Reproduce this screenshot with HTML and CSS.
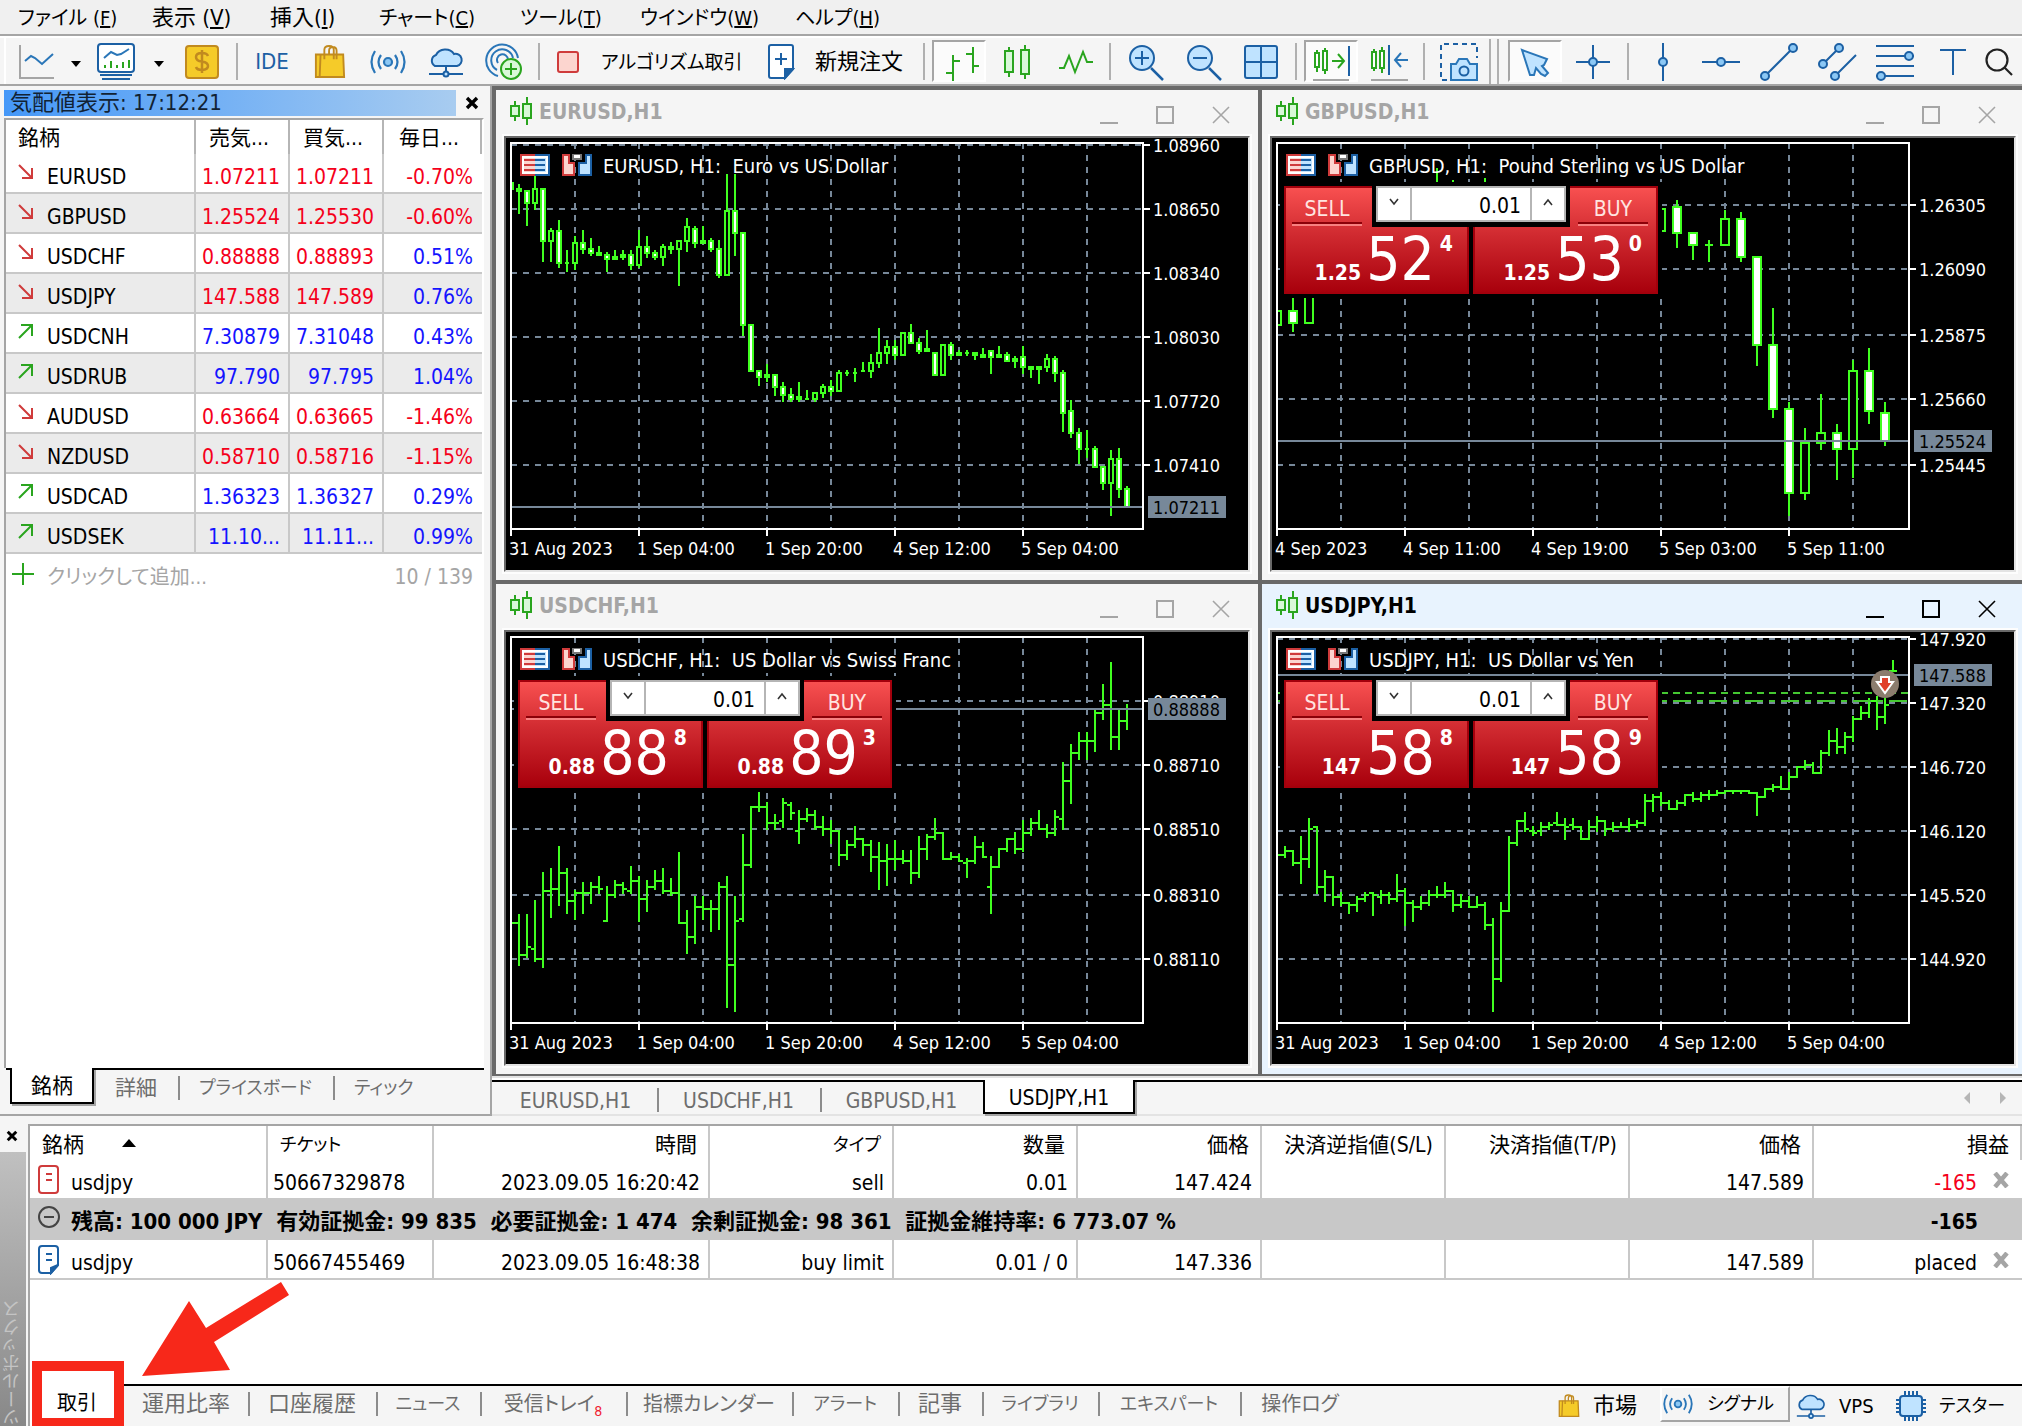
FILE: index.html
```html
<!DOCTYPE html>
<html lang="ja">
<head>
<meta charset="utf-8">
<title>USDJPY,H1</title>
<link rel="stylesheet" href="styles.css">
<script src="charts.js" defer></script>
</head>
<body>
<svg class="defs" aria-hidden="true">
  <defs>
    <clipPath id="plot"><path d="M5 5h632v386H5z"/></clipPath>
    <symbol id="i-candles" viewBox="0 0 24 28"><path d="M5 4v4M5 20v4M17 0v6M17 22v6" stroke="#2aa51f" stroke-width="2"/><path d="M1 9h8v10H1zM13 7h8v14h-8z" fill="#d9f8d9" stroke="#2aa51f" stroke-width="2"/></symbol>
    <symbol id="i-min" viewBox="0 0 18 18"><path d="M0 17h18" stroke="currentColor" stroke-width="2"/></symbol>
    <symbol id="i-max" viewBox="0 0 18 18"><path d="M1 1h16v16H1z" fill="none" stroke="currentColor" stroke-width="2"/></symbol>
    <symbol id="i-close" viewBox="0 0 18 18"><path d="M1 1l16 16M17 1L1 17" stroke="currentColor" stroke-width="1.6"/></symbol>
    <symbol id="i-x" viewBox="0 0 14 14"><path d="M2 2l10 10M12 2L2 12" stroke="currentColor" stroke-width="3.4"/></symbol>
    <symbol id="i-down" viewBox="0 0 16 16"><path d="M1 1l12 12M14 4v10H4" fill="none" stroke="#cf3b3b" stroke-width="2"/></symbol>
    <symbol id="i-up" viewBox="0 0 16 16"><path d="M1 14L13 2M3 1h11v11" fill="none" stroke="#2aa51f" stroke-width="2"/></symbol>
    <symbol id="i-bag" viewBox="0 0 34 36"><path d="M2 10h29l1 24H2z" fill="#f5cb29" stroke="#c18a1f" stroke-width="2"/><path d="M7 10L6 34M11 15V5q0-4 5-4t5 4v10M16 10V6q0-4 4-4t4 4v9" fill="none" stroke="#c18a1f" stroke-width="2"/></symbol>
    <symbol id="i-signal" viewBox="0 0 36 24"><g fill="none" stroke="#2a76b8" stroke-width="2.2"><circle cx="18" cy="12" r="4" fill="#8cc8f5"/><path d="M11 5q-5 7 0 14M5 1q-7 11 0 22M25 5q5 7 0 14M31 1q7 11 0 22"/></g></symbol>
    <symbol id="i-cloud" viewBox="0 0 36 32"><path d="M7 20a6 6 0 0 1 1-11 10 9 0 0 1 18-1 6 6 0 0 1 3 12z" fill="#bfe3ff" stroke="#1c60a4" stroke-width="2"/><path d="M18 20v6M1 28h34" stroke="#1c60a4" stroke-width="2"/><circle cx="18" cy="28" r="2.5" fill="#bfe3ff" stroke="#1c60a4" stroke-width="2"/></symbol>
    <symbol id="i-book" viewBox="0 0 30 22"><path d="M0 0h15v22H0z" fill="#cf3b3b"/><path d="M15 0h15v22H15z" fill="#1c60a4"/><path d="M2 2h26v18H2z" fill="#fff"/><path d="M4 4h11v14H4z" fill="#fcd5cf"/><path d="M15 4h11v14H15z" fill="#bfe3ff"/><path d="M4 6h11M4 11h11M4 16h11" stroke="#cf3b3b" stroke-width="2"/><path d="M15 6h10M15 11h10M15 16h10" stroke="#1c60a4" stroke-width="2"/></symbol>
    <symbol id="i-trade" viewBox="0 0 30 22"><path d="M1 1h6v8h5v12H1z" fill="#fcd5cf" stroke="#cf3b3b" stroke-width="2"/><path d="M29 1h-5v8h-7v12h12z" fill="#bfe3ff" stroke="#1c60a4" stroke-width="2"/><path d="M11 0h8v5h-8z" fill="#fff" stroke="#777" stroke-width="2"/></symbol>
    <symbol id="i-chev-d" viewBox="0 0 10 8"><path d="M1 1l4 5 4-5" fill="none" stroke="#333" stroke-width="1.6"/></symbol>
    <symbol id="i-chev-u" viewBox="0 0 10 8"><path d="M1 7l4-5 4 5" fill="none" stroke="#333" stroke-width="1.6"/></symbol>
  </defs>
</svg>

<nav class="menu">
  <button>ファイル (<u>F</u>)</button><button class="kanji">表示 (<u>V</u>)</button><button class="kanji">挿入(<u>I</u>)</button><button>チャート(<u>C</u>)</button><button>ツール(<u>T</u>)</button><button>ウインドウ(<u>W</u>)</button><button>ヘルプ(<u>H</u>)</button>
</nav>

<div class="toolbar">
  <button aria-label="Chart type"><svg width="40" height="40"><path d="M4 3v33h34" fill="none" stroke="#a5a5a5" stroke-width="2"/><path d="M9 19l6-5 4 2 7 6L37 12" fill="none" stroke="#2a76b8" stroke-width="2"/></svg></button>
  <button class="drop" aria-label="More"><svg width="10" height="6"><path d="M0 0h10L5 6z"/></svg></button>
  <button aria-label="Indicators"><svg width="40" height="40"><rect x="2" y="2" width="36" height="28" rx="3" fill="#fff" stroke="#1c60a4" stroke-width="2"/><path d="M4 33h32M6 37h28" stroke="#1c60a4" stroke-width="2"/><path d="M8 16l7-6 6 3 4-1 8-5" fill="none" stroke="#2a76b8" stroke-width="2"/><path d="M9 26v-3M15 26v-7M21 26v-3M27 26v-6M33 26v-8" stroke="#2aa51f" stroke-width="2"/></svg></button>
  <button class="drop wide" aria-label="More"><svg width="10" height="6"><path d="M0 0h10L5 6z"/></svg></button>
  <button aria-label="Quotes"><svg width="40" height="40"><rect x="4" y="4" width="32" height="32" rx="3" fill="#f5cb29" stroke="#c18a1f" stroke-width="2"/><path d="M26 14q-1-3-6-3-6 0-6 4t6 4.500q6 1 6 4.500t-6 4q-5 0-6-3M20 8v23" fill="none" stroke="#c18a1f" stroke-width="2.500"/></svg></button>
  <i class="sep"></i>
  <button class="ide">IDE</button>
  <button aria-label="Market"><svg width="32" height="36"><use href="#i-bag"/></svg></button>
  <button aria-label="Signals"><svg width="36" height="24"><use href="#i-signal"/></svg></button>
  <button aria-label="VPS"><svg width="36" height="32"><use href="#i-cloud"/></svg></button>
  <button aria-label="Community"><svg width="40" height="40"><g fill="none" stroke="#2a76b8" stroke-width="2"><path d="M14 34A16 16 0 1 1 34 16M13 28A11 11 0 1 1 29 16M14 21A5.500 5.500 0 1 1 24 18"/></g><circle cx="27" cy="27" r="10" fill="#d9f8d9" stroke="#2aa51f" stroke-width="2"/><path d="M27 21v12M21 27h12" stroke="#2aa51f" stroke-width="2"/></svg></button>
  <i class="sep"></i>
  <button class="algo"><svg width="22" height="22"><rect x="1" y="1" width="20" height="20" rx="2" fill="#fcd5cf" stroke="#cf3b3b" stroke-width="2"/></svg>アルゴリズム取引</button>
  <button class="order"><svg width="28" height="36"><path d="M4 1h20q2 0 2 2v22l-8 9H4q-2 0-2-2V3q0-2 2-2z" fill="#fff" stroke="#1c60a4" stroke-width="2"/><path d="M26 25l-8 9v-9zM14 9v12M8 15h12" fill="#1c60a4" stroke="#1c60a4" stroke-width="2"/></svg>新規注文</button>
  <i class="sep"></i>
  <button class="on" aria-label="Bars"><svg width="40" height="40"><path d="M14 14v26M14 20h7M7 32h7M34 6v26M27 13h7M34 25h7" stroke="#2aa51f" stroke-width="2"/></svg></button>
  <button aria-label="Candles"><svg width="40" height="40"><path d="M12 5v4M12 31v4M28 3v4M28 33v4" stroke="#2aa51f" stroke-width="2"/><path d="M8 9h8v21H8zM24 8h8v24h-8z" fill="#d9f8d9" stroke="#2aa51f" stroke-width="2"/></svg></button>
  <button aria-label="Line"><svg width="40" height="40"><path d="M4 26h5l5-12 6 16 8-20 4 10h6" fill="none" stroke="#2aa51f" stroke-width="2"/></svg></button>
  <i class="sep"></i>
  <button aria-label="Zoom in"><svg width="40" height="40"><path d="M26 26l12 12" stroke="#1c60a4" stroke-width="2.500"/><circle cx="17" cy="16" r="12" fill="#bfe3ff" stroke="#1c60a4" stroke-width="2"/><path d="M10 16h14M17 9v14" stroke="#1c60a4" stroke-width="2"/></svg></button>
  <button aria-label="Zoom out"><svg width="40" height="40"><path d="M26 26l12 12" stroke="#1c60a4" stroke-width="2.500"/><circle cx="17" cy="16" r="12" fill="#bfe3ff" stroke="#1c60a4" stroke-width="2"/><path d="M10 16h14" stroke="#1c60a4" stroke-width="2"/></svg></button>
  <button aria-label="Tile"><svg width="40" height="40"><rect x="4" y="4" width="32" height="32" rx="2" fill="#bfe3ff" stroke="#1c60a4" stroke-width="2"/><path d="M20 4v32M4 20h32" stroke="#1c60a4" stroke-width="2"/></svg></button>
  <i class="sep"></i>
  <button class="on" aria-label="Auto scroll"><svg width="40" height="40"><path d="M6 9v22M14 7v26" stroke="#2aa51f" stroke-width="2"/><path d="M4 12h4v14H4zM12 10h4v19h-4z" fill="#fff" stroke="#2aa51f" stroke-width="2"/><path d="M21 20h12M27 13l6 7-6 7" fill="none" stroke="#2aa51f" stroke-width="2"/><path d="M38 5v30" stroke="#1c60a4" stroke-width="2"/><path d="M2 39h36" stroke="#a5a5a5" stroke-width="2"/></svg></button>
  <button aria-label="Chart shift"><svg width="40" height="40"><path d="M5 7v22M13 5v26" stroke="#2aa51f" stroke-width="2"/><path d="M3 10h4v16H3zM11 9h4v17h-4z" fill="#fff" stroke="#2aa51f" stroke-width="2"/><path d="M20 3v30" stroke="#1c60a4" stroke-width="2"/><path d="M39 18H26M32 11l-6 7 6 7" fill="none" stroke="#2a76b8" stroke-width="2"/><path d="M2 38h37" stroke="#a5a5a5" stroke-width="2"/></svg></button>
  <i class="sep"></i>
  <button aria-label="Screenshot"><svg width="40" height="40"><path d="M8 38H2V2h36v14" fill="none" stroke="#1c60a4" stroke-width="2" stroke-dasharray="5 4"/><path d="M12 22h5l3-5h8l3 5h7v16H12z" fill="#bfe3ff" stroke="#2a76b8" stroke-width="2"/><circle cx="25" cy="29" r="4.500" fill="#bfe3ff" stroke="#1c60a4" stroke-width="2"/></svg></button>
  <i class="sep double"></i>
  <button class="on" aria-label="Cursor"><svg width="40" height="40"><path d="M7 9l25 9-3 6-2 1 6 7-3 3-4-2-5-6-2 7h-4z" fill="#bfe3ff" stroke="#2a76b8" stroke-width="2"/></svg></button>
  <button aria-label="Crosshair"><svg width="40" height="40"><path d="M3 20h34M20 3v34" stroke="#1c60a4" stroke-width="2"/><circle cx="20" cy="20" r="4" fill="#8cc8f5" stroke="#1c60a4" stroke-width="2"/></svg></button>
  <i class="sep"></i>
  <button aria-label="Vertical line"><svg width="40" height="40"><path d="M20 1v38" stroke="#1c60a4" stroke-width="2"/><circle cx="20" cy="20" r="4" fill="#8cc8f5" stroke="#1c60a4" stroke-width="2"/></svg></button>
  <button aria-label="Horizontal line"><svg width="40" height="40"><path d="M1 20h38" stroke="#1c60a4" stroke-width="2"/><circle cx="20" cy="20" r="4" fill="#8cc8f5" stroke="#1c60a4" stroke-width="2"/></svg></button>
  <button aria-label="Trend line"><svg width="40" height="40"><path d="M6 34L34 6" stroke="#1c60a4" stroke-width="2"/><g fill="#8cc8f5" stroke="#1c60a4" stroke-width="2"><circle cx="6" cy="34" r="4"/><circle cx="34" cy="6" r="4"/></g></svg></button>
  <button aria-label="Channel"><svg width="40" height="40"><path d="M6 22L22 6M18 34l21-21" stroke="#1c60a4" stroke-width="2"/><g fill="#8cc8f5" stroke="#1c60a4" stroke-width="2"><circle cx="6" cy="22" r="4"/><circle cx="22" cy="6" r="4"/><circle cx="18" cy="34" r="4"/></g></svg></button>
  <button aria-label="Fibonacci"><svg width="40" height="40"><path d="M1 4h38M1 14h38M1 24h38M1 34h38" stroke="#1c60a4" stroke-width="2"/><g fill="#8cc8f5" stroke="#1c60a4" stroke-width="2"><circle cx="34" cy="14" r="4"/><circle cx="6" cy="34" r="4"/></g></svg></button>
  <button aria-label="Text"><svg width="40" height="40"><path d="M7 8h26M20 8v25" stroke="#1c60a4" stroke-width="2"/></svg></button>
  <button class="search" aria-label="Search"><svg width="34" height="40"><circle cx="15" cy="18" r="10.500" fill="none" stroke="#222" stroke-width="2.200"/><path d="M22 25l8 8" stroke="#222" stroke-width="2.200"/></svg></button>
</div>

<main class="main">
  <section class="watch">
    <header><h2>気配値表示: 17:12:21</h2><button aria-label="Close"><svg width="14" height="14"><use href="#i-x"/></svg></button></header>
    <div class="watch-body">
      <table class="quotes">
        <thead><tr><th>銘柄</th><th>売気...</th><th>買気...</th><th>毎日...</th></tr></thead>
        <tbody>
          <tr><td><svg><use href="#i-down"/></svg>EURUSD</td><td class="neg">1.07211</td><td class="neg">1.07211</td><td class="neg">-0.70%</td></tr>
          <tr><td><svg><use href="#i-down"/></svg>GBPUSD</td><td class="neg">1.25524</td><td class="neg">1.25530</td><td class="neg">-0.60%</td></tr>
          <tr><td><svg><use href="#i-down"/></svg>USDCHF</td><td class="neg">0.88888</td><td class="neg">0.88893</td><td class="pos">0.51%</td></tr>
          <tr><td><svg><use href="#i-down"/></svg>USDJPY</td><td class="neg">147.588</td><td class="neg">147.589</td><td class="pos">0.76%</td></tr>
          <tr><td><svg><use href="#i-up"/></svg>USDCNH</td><td class="pos">7.30879</td><td class="pos">7.31048</td><td class="pos">0.43%</td></tr>
          <tr><td><svg><use href="#i-up"/></svg>USDRUB</td><td class="pos">97.790</td><td class="pos">97.795</td><td class="pos">1.04%</td></tr>
          <tr><td><svg><use href="#i-down"/></svg>AUDUSD</td><td class="neg">0.63664</td><td class="neg">0.63665</td><td class="neg">-1.46%</td></tr>
          <tr><td><svg><use href="#i-down"/></svg>NZDUSD</td><td class="neg">0.58710</td><td class="neg">0.58716</td><td class="neg">-1.15%</td></tr>
          <tr><td><svg><use href="#i-up"/></svg>USDCAD</td><td class="pos">1.36323</td><td class="pos">1.36327</td><td class="pos">0.29%</td></tr>
          <tr><td><svg><use href="#i-up"/></svg>USDSEK</td><td class="pos">11.10...</td><td class="pos">11.11...</td><td class="pos">0.99%</td></tr>
        </tbody>
      </table>
      <div class="add"><svg width="22" height="22"><path d="M11 0v22M0 11h22" stroke="#2aa51f" stroke-width="2"/></svg><span>クリックして追加...</span><span class="count">10 / 139</span></div>
    </div>
    <nav class="watch-tabs"><button class="active">銘柄</button><button class="kanji">詳細</button><button class="kana">プライスボード</button><button class="kana">ティック</button></nav>
  </section>

  <section class="mdi">
    <div class="windows">
      <article class="win">
        <header><svg class="w-icon"><use href="#i-candles"/></svg><h3>EURUSD,H1</h3><button aria-label="Minimize"><svg><use href="#i-min"/></svg></button><button aria-label="Maximize"><svg><use href="#i-max"/></svg></button><button aria-label="Close"><svg><use href="#i-close"/></svg></button></header>
        <div class="frame"><svg class="chart" data-chart="eurusd" width="742" height="432"></svg></div>
      </article>
      <article class="win">
        <header><svg class="w-icon"><use href="#i-candles"/></svg><h3>GBPUSD,H1</h3><button aria-label="Minimize"><svg><use href="#i-min"/></svg></button><button aria-label="Maximize"><svg><use href="#i-max"/></svg></button><button aria-label="Close"><svg><use href="#i-close"/></svg></button></header>
        <div class="frame"><svg class="chart" data-chart="gbpusd" width="742" height="432"></svg>
          <div class="deal">
            <button class="side"><span class="name">SELL</span><span class="price"><b>1.25</b><span class="big">52</span><span class="pip">4</span></span></button>
            <button class="side"><span class="name">BUY</span><span class="price"><b>1.25</b><span class="big">53</span><span class="pip">0</span></span></button>
            <div class="lot"><button aria-label="Less"><svg><use href="#i-chev-d"/></svg></button><input value="0.01" aria-label="Volume"><button aria-label="More"><svg><use href="#i-chev-u"/></svg></button></div>
          </div>
        </div>
      </article>
      <article class="win">
        <header><svg class="w-icon"><use href="#i-candles"/></svg><h3>USDCHF,H1</h3><button aria-label="Minimize"><svg><use href="#i-min"/></svg></button><button aria-label="Maximize"><svg><use href="#i-max"/></svg></button><button aria-label="Close"><svg><use href="#i-close"/></svg></button></header>
        <div class="frame"><svg class="chart" data-chart="usdchf" width="742" height="432"></svg>
          <div class="deal">
            <button class="side"><span class="name">SELL</span><span class="price"><b>0.88</b><span class="big">88</span><span class="pip">8</span></span></button>
            <button class="side"><span class="name">BUY</span><span class="price"><b>0.88</b><span class="big">89</span><span class="pip">3</span></span></button>
            <div class="lot"><button aria-label="Less"><svg><use href="#i-chev-d"/></svg></button><input value="0.01" aria-label="Volume"><button aria-label="More"><svg><use href="#i-chev-u"/></svg></button></div>
          </div>
        </div>
      </article>
      <article class="win current">
        <header><svg class="w-icon"><use href="#i-candles"/></svg><h3>USDJPY,H1</h3><button aria-label="Minimize"><svg><use href="#i-min"/></svg></button><button aria-label="Maximize"><svg><use href="#i-max"/></svg></button><button aria-label="Close"><svg><use href="#i-close"/></svg></button></header>
        <div class="frame"><svg class="chart" data-chart="usdjpy" width="742" height="432"></svg>
          <div class="deal">
            <button class="side"><span class="name">SELL</span><span class="price"><b>147</b><span class="big">58</span><span class="pip">8</span></span></button>
            <button class="side"><span class="name">BUY</span><span class="price"><b>147</b><span class="big">58</span><span class="pip">9</span></span></button>
            <div class="lot"><button aria-label="Less"><svg><use href="#i-chev-d"/></svg></button><input value="0.01" aria-label="Volume"><button aria-label="More"><svg><use href="#i-chev-u"/></svg></button></div>
          </div>
        </div>
      </article>
    </div>
    <nav class="mdi-tabs">
      <button>EURUSD,H1</button><button>USDCHF,H1</button><button>GBPUSD,H1</button><button class="active">USDJPY,H1</button>
      <span class="scroll"><button aria-label="Previous"><svg width="6" height="12"><path d="M6 0v12L0 6z"/></svg></button><button aria-label="Next"><svg width="6" height="12"><path d="M0 0v12l6-6z"/></svg></button></span>
    </nav>
  </section>
</main>

<section class="toolbox">
  <aside><button aria-label="Close"><svg width="12" height="12"><use href="#i-x"/></svg></button><span>ツールボックス</span></aside>
  <div class="toolbox-body">
    <table class="trades">
      <colgroup><col class="c-sym"><col class="c-ticket"><col class="c-time"><col><col><col><col><col><col><col class="c-profit"></colgroup>
      <thead><tr><th>銘柄<svg width="14" height="8"><path d="M7 0l7 8H0z"/></svg></th><th class="kana">チケット</th><th>時間</th><th class="kana">タイプ</th><th>数量</th><th>価格</th><th>決済逆指値(S/L)</th><th>決済指値(T/P)</th><th>価格</th><th>損益</th></tr></thead>
      <tbody>
        <tr><td><svg width="22" height="30"><rect x="1" y="1" width="19" height="27" rx="3" fill="#fff" stroke="#cf3b3b" stroke-width="2"/><path d="M8 9h6M8 15h6" stroke="#cf3b3b" stroke-width="2"/></svg>usdjpy</td><td>50667329878</td><td>2023.09.05 16:20:42</td><td>sell</td><td>0.01</td><td>147.424</td><td></td><td></td><td>147.589</td><td><span class="neg">-165</span><button aria-label="Close position"><svg width="18" height="16"><path d="M3 1l12 14M15 1L3 15" stroke="#a5a5a5" stroke-width="4.500"/></svg></button></td></tr>
        <tr class="sum"><td colspan="9"><svg width="22" height="22"><circle cx="11" cy="11" r="10" fill="none" stroke="#444" stroke-width="2"/><path d="M6 11h10" stroke="#444" stroke-width="2"/></svg>残高: 100 000 JPY&nbsp; 有効証拠金: 99 835&nbsp; 必要証拠金: 1 474&nbsp; 余剰証拠金: 98 361&nbsp; 証拠金維持率: 6 773.07 %</td><td>-165</td></tr>
        <tr><td><svg width="22" height="30"><path d="M4 1h13q3 0 3 3v16l-7 8H4q-3 0-3-3V4q0-3 3-3z" fill="#fff" stroke="#1c60a4" stroke-width="2"/><path d="M20 20l-7 8v-5zM8 9h6M8 15h6" fill="#1c60a4" stroke="#1c60a4" stroke-width="2"/></svg>usdjpy</td><td>50667455469</td><td>2023.09.05 16:48:38</td><td>buy limit</td><td>0.01 / 0</td><td>147.336</td><td></td><td></td><td>147.589</td><td>placed<button aria-label="Cancel order"><svg width="18" height="16"><path d="M3 1l12 14M15 1L3 15" stroke="#a5a5a5" stroke-width="4.500"/></svg></button></td></tr>
      </tbody>
    </table>
    <footer>
      <nav class="box-tabs"><button class="active">取引</button><button class="kanji">運用比率</button><button class="kanji">口座履歴</button><button class="kana">ニュース</button><button>受信トレイ<sub>8</sub></button><button>指標カレンダー</button><button class="kana">アラート</button><button class="kanji">記事</button><button class="kana">ライブラリ</button><button class="kana">エキスパート</button><button>操作ログ</button></nav>
      <nav class="services"><button class="kanji"><svg width="22" height="26"><use href="#i-bag"/></svg>市場</button><button class="raised kana"><svg width="32" height="20"><use href="#i-signal"/></svg>シグナル</button><button><svg width="30" height="28"><use href="#i-cloud"/></svg>VPS</button><button class="kana"><svg width="30" height="30"><path d="M9 0v30M13 0v30M17 0v30M21 0v30M0 9h30M0 13h30M0 17h30M0 21h30" stroke="#1c60a4" stroke-width="2"/><rect x="4" y="5" width="22" height="20" rx="3" fill="#bfe3ff" stroke="#1c60a4" stroke-width="2"/></svg>テスター</button></nav>
    </footer>
    <div class="callout"></div>
    <svg class="arrow" width="150" height="96"><path d="M0 94L47 19l17 27L139 0l8 13L72 60l16 28z" fill="#f7281a"/></svg>
  </div>
</section>
</body>
</html>
```
FILE: styles.css
```css
* { box-sizing: border-box; }
body {
  margin: 0;
  min-height: 100vh;
  display: flex;
  flex-direction: column;
  background: #f5f5f5;
  color: #000;
  font: 21px/26px "DejaVu Sans Condensed", "Noto Sans CJK JP", sans-serif;
  font-feature-settings: "palt";
}
button {
  margin: 0;
  padding: 0;
  border: 0;
  background: none;
  color: inherit;
  font: inherit;
  font-feature-settings: inherit;
  white-space: nowrap;
}
h2, h3 { margin: 0; font-size: 21px; line-height: 26px; }
svg { display: block; flex: none; }
.defs { position: absolute; width: 0; height: 0; }
.neg { color: #f5001a; }
.pos { color: #1414ff; }

/* menu */
.menu {
  display: grid;
  grid-template-columns: 134px 118px 109px 141px 120px 155px 100px;
  height: 36px;
  padding: 2px 0 0 18px;
  background: #f0f0f0;
  border-bottom: 2px solid #a5a5a5;
  font-size: 20px;
}
.menu button { text-align: left; }

/* toolbar */
.toolbar {
  display: flex;
  height: 50px;
  padding: 1px 0 0 7px;
  border-top: 2px solid #fff;
  border-bottom: 2px solid #a5a5a5;
  box-shadow: inset 4px 0 #f5f5f5, inset 6px 0 #fff;
}
.toolbar button { display: flex; align-items: center; justify-content: center; flex: none; width: 58px; }
.toolbar .drop { width: 22px; padding-top: 4px; }
.toolbar .wide { width: 28px; }
.toolbar .ide { color: #1c60a4; font-size: 22px; }
.toolbar .algo, .toolbar .order { justify-content: flex-start; padding-left: 12px; gap: 22px; }
.toolbar .algo { width: 206px; font-size: 19px; }
.toolbar .order { width: 167px; padding-left: 16px; gap: 20px; font-size: 22px; }
.toolbar .search { width: 34px; }
.toolbar .on {
  width: 54px;
  margin: 1px 2px 2px;
  background: #fbfbfb;
  border: 2px solid #fff;
  border-top-color: #a5a5a5;
  border-left-color: #a5a5a5;
}
.sep { flex: none; width: 2px; margin: 4px 5px; background: #b0b0b0; }
.double { width: 10px; margin: 0 7px 0 1px; background: none; border: solid #b0b0b0; border-width: 0 2px; }

/* main area */
.main { display: grid; grid-template-columns: 490px minmax(0, 1fr); height: 1030px; }

.watch { display: flex; flex-direction: column; padding: 4px 6px 6px 4px; border-bottom: 2px solid #a5a5a5; }
.watch header { display: flex; align-items: center; height: 26px; margin-bottom: 2px; }
.watch h2 {
  width: 452px;
  padding-left: 6px;
  font-size: 22px;
  font-weight: normal;
  color: #123;
  background: linear-gradient(90deg, #4598f8, #a8ccf0);
}
.watch header button { padding-left: 9px; }
.watch-body { flex: 1; width: 480px; background: #fff; border: 2px solid #a5a5a5; border-width: 2px 0 0 2px; border-right: 2px solid #fff; }
.quotes { width: 476px; border-spacing: 0; table-layout: fixed; }
.quotes th { height: 34px; padding: 2px 6px 0 0; font-weight: normal; border-right: 2px solid #b5b5b5; }
.quotes th:first-child { width: 190px; padding-left: 12px; text-align: left; }
.quotes th:nth-child(2) { width: 94px; }
.quotes th:nth-child(3) { width: 94px; }
.quotes td { height: 40px; padding: 7px 8px 0 0; text-align: right; border: solid #c8c8c8; border-width: 0 2px 2px 0; }
.quotes td:last-child { border-right-width: 0; padding-right: 9px; }
.quotes td:first-child { padding: 7px 0 0 12px; text-align: left; }
.quotes td svg { float: left; width: 16px; height: 16px; margin: 0 13px 0 0; }
.quotes tr:nth-child(even) { background: #ebebeb; }
.add { display: flex; gap: 13px; height: 40px; padding: 9px 9px 0 6px; color: #a5a5a5; }
.add span { padding-top: 1px; font-size: 20px; }
.add .count { margin-left: auto; font-size: 21px; }

.watch-tabs { display: flex; width: 478px; height: 40px; margin-left: 2px; border-top: 2px solid #000; color: #6d6d6d; font-size: 21px; }
.watch-tabs button { position: relative; height: 34px; padding: 2px 21px 0; }
.watch-tabs button + button + button::before, .mdi-tabs > button + button:not(.active)::before,
.box-tabs button:nth-child(n+3)::before { content: ""; position: absolute; left: 0; top: 6px; width: 2px; height: 24px; background: #8c8c8c; }
.watch-tabs .active { margin: -2px 0 0 4px; height: 36px; width: 84px; padding: 2px 0 0; background: #fff; color: #000; border: 2px solid #000; border-top: 0; box-shadow: 2px 2px #a5a5a5; }

.mdi { display: flex; flex-direction: column; min-width: 0; border-left: 2px solid #a5a5a5; }
.windows {
  display: grid;
  grid-template-columns: minmax(0, 762fr) minmax(0, 760fr);
  gap: 4px;
  padding: 4px 0 2px 4px;
  background: #696969;
}
.win { padding: 0 6px 6px; background: #f5f5f5; color: #a5a5a5; }
.win header { display: flex; align-items: center; height: 44px; padding: 0 22px 0 8px; }
.win:nth-child(even) { padding-right: 4px; }
.w-icon { width: 24px; height: 28px; margin-top: -2px; }
.win h3 { flex: 1; padding-left: 5px; }
.win header button { padding-top: 6px; margin-left: 38px; }
.win header button svg { width: 18px; height: 18px; }
.current { background: #e8f3fe; color: #000; }
.frame {
  position: relative;
  margin: 2px;
  overflow: hidden;
  background: #000;
  border: 2px solid;
  border-color: #696969 #e3e3e3 #e3e3e3 #696969;
  outline: 2px solid #fdfdfd;
  box-shadow: -2px -2px 0 0 #a5a5a5;
}
.chart { font-size: 18px; fill: #fff; }
.chart .title { font-size: 20px; }

/* one click trading */
.deal { position: absolute; left: 12px; top: 48px; display: flex; gap: 4px; background: #000; box-shadow: 0 0 0 4px #000; }
.side {
  display: flex;
  flex-direction: column;
  width: 185px;
  height: 108px;
  border: 2px solid #a3000c;
  color: #fff;
  background: linear-gradient(#f85050, #d02a30 45%, #a8000c);
}
.side .name { width: 70px; height: 40px; margin: 0 6px; padding-top: 8px; border-bottom: 2px solid #f88080; color: #ffe4e0; box-shadow: inset 0 -2px #8c0008; }
.side:nth-child(2) .name { align-self: flex-end; margin-right: 8px; }
.price { display: flex; align-items: baseline; align-self: flex-end; gap: 5px; padding-right: 14px; }
.big { font-size: 60px; line-height: 66px; }
.pip { align-self: flex-start; font-weight: bold; line-height: 36px; }
.lot { position: absolute; left: 88px; top: 0; display: flex; width: 198px; height: 41px; padding: 0 4px 5px; background: #000; }
.lot button { display: flex; align-items: center; justify-content: center; width: 36px; background: #fff; border: 2px solid #b5b5b5; }
.lot button svg { width: 10px; height: 8px; margin-bottom: 4px; }
.lot input { flex: 1; min-width: 0; padding: 4px 9px 0; border: solid #b5b5b5; border-width: 2px 0; font: inherit; text-align: right; outline: 0; }

.mdi-tabs { display: flex; flex: 1; border-top: 2px solid #000; margin-top: 4px; padding-left: 2px; box-shadow: 0 -2px #fff, 0 -4px #e3e3e3; border-bottom: 2px solid #e3e3e3; color: #6d6d6d; }
.mdi-tabs > button { position: relative; width: 163px; padding: 5px 0 0; }
.mdi-tabs .active { width: 152px; height: 34px; margin-top: -2px; padding-top: 3px; background: #fff; color: #000; border: 2px solid #000; border-top: 0; box-shadow: 2px 2px #a5a5a5; }
.scroll { display: flex; align-items: center; gap: 30px; margin-left: auto; padding-right: 16px; }
.scroll svg { fill: #b5b5b5; }

/* toolbox */
.toolbox { display: flex; flex: 1; min-height: 302px; margin-top: 8px; }
.toolbox aside { display: flex; flex-direction: column; width: 28px; }
.toolbox aside button { height: 28px; padding: 0 6px 4px; }
.toolbox aside span {
  flex: 1;
  width: 26px;
  padding-bottom: 4px;
  writing-mode: vertical-rl;
  transform: rotate(180deg);
  color: #c4c4c4;
  background: linear-gradient(#888, #c0c0c0);
  font-size: 18px;
}
.toolbox-body { position: relative; display: flex; flex-direction: column; flex: 1; min-width: 0; border: solid #a5a5a5; border-width: 2px 0 0 2px; background: #fff; }
.trades { width: 100%; table-layout: fixed; border-spacing: 0; }
.trades col { width: 184px; }
.trades .c-sym { width: 238px; }
.trades .c-ticket { width: 166px; }
.trades .c-time { width: 276px; }
.trades .c-profit { width: auto; }
.trades th { height: 34px; padding: 3px 11px 0 0; font-weight: normal; text-align: right; border-right: 2px solid #c8c8c8; white-space: nowrap; }
.trades th:nth-child(-n+2) { padding-left: 12px; text-align: left; }
.trades th svg { display: inline-block; margin: 0 0 5px 38px; }
.trades td { height: 38px; padding: 7px 8px 0 0; text-align: right; white-space: nowrap; border-right: 2px solid #c8c8c8; }
.trades td:last-child { border-right: 0; padding-right: 12px; }
.trades td:nth-child(2):not(:last-child) { padding-left: 5px; text-align: left; }
.trades td:first-child { padding-left: 8px; text-align: left; }
.trades td:first-child svg { float: left; margin: -5px 11px 0 0; }
.trades td button { margin-left: 15px; vertical-align: 2px; }
.trades .sum { background: #c8c8c8; font-size: 22px; font-weight: bold; font-feature-settings: normal; }
.trades .sum td { height: 42px; padding-top: 5px; border: 0; }
.trades .sum td:first-child svg { margin-top: -3px; }
.trades .sum td:last-child { padding-right: 44px; font-size: 21px; }
.trades tr:last-child td { height: 40px; border-bottom: 2px solid #c8c8c8; }

.toolbox footer { display: flex; justify-content: space-between; height: 42px; margin-top: auto; border-top: 2px solid #000; background: #f5f5f5; }
.box-tabs {
  display: grid;
  grid-template-columns: 94px 124px 128px 104px 146px 166px 106px 84px 116px 142px 120px;
  color: #6d6d6d;
  font-size: 20px;
}
.box-tabs button { position: relative; padding: 0 0 4px; }
.box-tabs .active { margin-top: -2px; color: #000; background: #fff; }
.box-tabs sub { color: #f02030; font-size: 14px; line-height: 14px; }
.services { display: grid; grid-template-columns: 102px 136px 100px 126px; font-size: 20px; }
.services button { display: flex; align-items: center; gap: 13px; }
.services .raised { width: 130px; margin-bottom: 4px; border: 2px solid #fff; border-right-color: #a5a5a5; border-bottom-color: #a5a5a5; }

.box-tabs .kana, .services .kana, .watch-tabs .kana, .trades .kana { font-size: 18px; }
.menu .kanji, .box-tabs .kanji, .services .kanji { font-size: 22px; }

/* highlight on the trade tab */
.callout { position: absolute; left: 2px; bottom: 0; width: 92px; height: 65px; border: 10px solid #f7281a; border-bottom-width: 8px; }
.arrow { position: absolute; left: 112px; bottom: 48px; }
```
FILE: charts.js
```js
// Bars are [high, open, close, low], measured downwards from the top of the price scale.
const CHARTS = {
  eurusd: {
    title: 'EURUSD, H1:  Euro vs US Dollar', kind: 'candle', step: 8, half: 2, top: 159, unit: 3,
    price: ['1.07211', 1266],
    scale: [['1.08960', 180], ['1.08650', 372], ['1.08340', 564], ['1.08030', 756], ['1.07720', 948], ['1.07410', 1140]],
    times: ['31 Aug 2023', '1 Sep 04:00', '1 Sep 20:00', '4 Sep 12:00', '5 Sep 04:00'],
    bars: [[290,292,314,315],[297,311,319,381],[316,317,355,417],[272,355,311,370],[310,311,469,525],[430,469,437,525],[405,437,536,543],[496,534,534,555],[453,536,473,549],[436,473,494,501],[459,491,505,507],[483,503,511,512],[501,509,523,555],[495,516,522,524],[495,510,516,519],[496,509,542,549],[436,542,485,545],[453,485,506,513],[495,502,517,524],[477,517,485,537],[472,486,492,501],[466,492,468,597],[399,469,425,495],[424,431,475,483],[424,468,473,476],[460,467,493,500],[465,491,571,573],[267,571,377,572],[267,377,443,507],[442,443,719,747],[718,719,859,860],[856,857,877,897],[837,869,877,885],[868,869,907,927],[891,905,931,945],[909,929,943,950],[891,936,942,950],[915,942,942,944],[922,943,923,950],[897,925,905,938],[885,905,919,927],[855,919,863,920],[856,863,863,872],[849,863,863,885],[831,857,857,860],[807,859,833,873],[729,835,803,843],[765,805,785,831],[765,785,811,819],[742,811,743,812],[717,743,775,776],[760,773,795,801],[735,792,798,800],[802,803,871,872],[778,871,779,872],[771,779,811,819],[795,804,810,812],[795,804,804,808],[802,804,810,819],[789,810,816,818],[796,797,817,861],[783,810,816,818],[801,809,829,830],[813,822,828,843],[783,815,847,861],[844,846,852,873],[844,846,852,891],[807,847,821,855],[813,821,865,885],[855,863,985,1035],[945,977,1045,1053],[1029,1043,1093,1131],[1035,1091,1091,1113],[1083,1091,1147,1148],[1144,1145,1195,1209],[1095,1195,1121,1287],[1089,1121,1213,1233],[1203,1211,1267,1268]]
  },
  gbpusd: {
    title: 'GBPUSD, H1:  Pound Sterling vs US Dollar', kind: 'candle', step: 16, half: 4, top: 159, unit: 3,
    price: ['1.25524', 1068],
    scale: [['1.26305', 360], ['1.26090', 552], ['1.25875', 750], ['1.25660', 942], ['1.25445', 1140]],
    times: ['4 Sep 2023', '4 Sep 11:00', '4 Sep 19:00', '5 Sep 03:00', '5 Sep 11:00'],
    bars: [[678,720,679,720],[620,677,713,735],[500,713,540,714],null,null,null,null,null,null,null,[249,310,340,350],[285,310,340,350],null,[279,310,340,350],null,null,null,null,null,null,null,null,null,null,[371,437,372,438],[345,366,443,483],[442,443,480,519],[465,480,480,525],[375,480,403,482],[381,402,515,525],[515,516,779,837],[669,780,971,993],[951,971,1223,1287],[1029,1223,1075,1239],[927,1074,1044,1089],[1017,1044,1092,1179],[825,1091,858,1173],[789,858,978,1011],[951,984,1068,1077]]
  },
  usdchf: {
    title: 'USDCHF, H1:  US Dollar vs Swiss Franc', kind: 'bar', step: 8, top: 156, unit: 3,
    price: ['0.88888', 387],
    scale: [['0.88910', 364], ['0.88710', 555], ['0.88510', 748], ['0.88310', 945], ['0.88110', 1137]],
    times: ['31 Aug 2023', '1 Sep 04:00', '1 Sep 20:00', '4 Sep 12:00', '5 Sep 04:00'],
    bars: [[1029,1029,1029,1029],[1003,1029,1125,1152],[1003,1125,1102,1128],[960,1105,1137,1145],[877,1137,932,1163],[864,932,926,1013],[799,926,878,972],[864,878,963,996],[930,963,938,1014],[906,938,940,996],[906,940,920,966],[888,920,926,938],[918,1022,944,1023],[900,944,914,948],[911,914,926,936],[858,934,902,936],[888,902,957,1020],[900,957,920,990],[870,920,902,924],[864,902,934,936],[894,934,938,942],[816,938,1028,1028],[990,1028,1071,1116],[948,1071,982,1086],[948,982,987,1019],[960,987,987,1050],[906,987,920,1044],[888,920,1155,1278],[948,1155,1020,1290],[762,1014,855,1020],[680,857,682,863],[636,682,682,690],[667,682,730,748],[702,730,728,748],[655,724,670,738],[667,674,700,714],[690,752,717,786],[685,717,705,724],[690,705,740,744],[708,740,745,767],[725,747,752,787],[750,752,826,852],[780,826,795,834],[738,793,776,798],[774,776,795,822],[780,795,830,870],[786,830,843,924],[792,843,837,912],[780,837,838,864],[815,838,843,848],[810,843,880,906],[768,880,806,888],[762,806,770,838],[714,770,758,774],[756,758,836,838],[816,836,832,838],[822,832,843,843],[834,849,843,888],[768,843,800,846],[786,800,830,832],[828,920,860,996],[804,858,806,860],[774,806,776,812],[756,776,806,816],[720,806,758,810],[714,758,728,762],[690,728,746,748],[732,746,760,768],[690,758,712,762],[546,715,603,744],[492,603,518,666],[456,518,482,534],[460,482,484,534],[384,484,398,510],[312,398,374,414],[246,374,470,504],[384,470,422,504],[372,422,388,444]]
  },
  usdjpy: {
    title: 'USDJPY, H1:  US Dollar vs Yen', kind: 'bar', step: 8, top: 150, unit: 2.904, orders: true,
    price: ['147.588', 276],
    scale: [['147.920', 171], ['147.320', 357], ['146.720', 543], ['146.120', 729], ['145.520', 915], ['144.920', 1101]],
    times: ['31 Aug 2023', '1 Sep 04:00', '1 Sep 20:00', '4 Sep 12:00', '5 Sep 04:00'],
    bars: [[798,798,798,798],[772,798,788,806],[786,786,822,824],[743,822,808,877],[691,808,722,830],[715,717,890,906],[842,890,860,930],[860,860,918,940],[906,918,937,943],[935,937,943,964],[918,943,926,958],[906,926,914,932],[906,908,914,970],[900,917,914,935],[906,914,928,935],[854,926,903,930],[894,903,937,999],[930,937,948,987],[918,948,937,952],[900,937,914,940],[888,914,914,920],[877,914,903,918],[900,903,943,958],[912,943,930,950],[918,930,948,950],[918,948,943,950],[935,943,1003,1010],[981,1003,1159,1248],[935,1159,960,1166],[743,960,765,958],[697,765,700,767],[674,700,720,725],[715,725,732,738],[703,730,717,738],[703,717,710,722],[674,706,712,712],[691,712,714,749],[691,712,716,720],[714,716,750,754],[697,750,716,754],[685,716,700,726],[697,700,722,738],[703,722,716,726],[703,717,717,718],[691,717,712,726],[697,712,706,718],[622,706,642,708],[622,640,630,668],[617,630,648,650],[640,646,664,666],[640,664,647,664],[621,647,624,650],[617,624,637,640],[620,637,624,640],[612,624,624,634],[610,622,619,626],[610,619,612,620],[609,612,612,615],[609,612,612,615],[609,612,619,620],[617,619,628,679],[604,628,606,630],[592,606,600,610],[570,600,606,608],[562,606,572,608],[540,572,542,573],[524,540,538,546],[530,538,560,562],[495,560,500,562],[436,502,467,510],[430,467,485,504],[442,485,456,504],[396,456,400,468],[367,400,386,404],[347,386,350,394],[340,350,398,430],[340,398,360,412],[232,262,262,262]]
  }
};

const LEFT = 5, RIGHT = 637, TOP = 5, BOTTOM = 391;
const GREEN = '#40ff20', GRID = '#778899';

function draw(svg, c) {
  const y = v => 2 * Math.floor((v - c.top) / c.unit / 2) + 1;
  let out = '', grid = '', wicks = '', down = '', up = '', ticks = '';

  for (let x = 69; x < RIGHT; x += 64) grid += `M${x} ${TOP}V${BOTTOM}`;
  c.scale.forEach(([, v]) => { grid += `M${LEFT} ${y(v)}H${RIGHT}`; });
  out += `<path d="${grid}" stroke="${GRID}" stroke-width="2" stroke-dasharray="6 6"/>`;

  c.bars.forEach((bar, i) => {
    if (!bar) return;
    const x = LEFT + c.step * i;
    const [h, o, cl, l] = bar.map(y);
    wicks += `M${x} ${h - 1}V${l + 1}`;
    if (c.kind === 'bar') {
      wicks += `M${x - 4} ${o}h4M${x} ${cl}h4`;
    } else {
      const body = `M${x - c.half} ${Math.min(o, cl)}h${2 * c.half}V${Math.max(o, cl)}h${-2 * c.half}z`;
      if (cl >= o) down += body; else up += body;
    }
  });
  out += `<g clip-path="url(#plot)" stroke="${GREEN}" stroke-width="2"><path d="${wicks}" fill="none"/>`;
  out += `<path d="${down}" fill="#fff"/><path d="${up}" fill="#000"/></g>`;

  const py = y(c.price[1]);
  out += `<path d="M${LEFT} ${py}H${RIGHT}" stroke="${GRID}" stroke-width="2"/>`;
  if (c.orders) {
    out += `<path d="M${LEFT} 61H${RIGHT}" stroke="#45c832" stroke-width="2" stroke-dasharray="7 5"/>`;
    out += `<path d="M${LEFT} 69H${RIGHT}" stroke="#45c832" stroke-width="2" stroke-dasharray="18 6 6 6"/>`;
    out += `<path d="M15 45H190" stroke="#fff" stroke-width="2" stroke-dasharray="2 9 3 7 2 5"/>`;
    out += `<circle cx="613" cy="52" r="14" fill="#8c7d6e"/><path d="M609 45h8v5h4l-8 11-8-11h4z" fill="#e0402a" stroke="#fff" stroke-width="2"/>`;
  }

  c.scale.forEach(([label, v]) => {
    ticks += `M${RIGHT} ${y(v)}h7`;
    out += `<text x="647" y="${y(v) + 7}">${label}</text>`;
  });
  c.times.forEach((label, i) => {
    const x = LEFT + 128 * i;
    ticks += `M${x} ${BOTTOM}v7`;
    out += `<text x="${x - 2}" y="417">${label}</text>`;
  });
  out += `<path d="M${LEFT} ${TOP}H${RIGHT}V${BOTTOM}H${LEFT}z${ticks}" fill="none" stroke="#fff" stroke-width="2"/>`;
  out += `<path d="M642 ${py - 11}h78v22h-78z" fill="${GRID}"/><text x="647" y="${py + 7}" fill="#000">${c.price[0]}</text>`;
  out += `<use href="#i-book" x="14" y="16" width="30" height="22"/><use href="#i-trade" x="56" y="16" width="30" height="22"/>`;
  out += `<text class="title" x="97" y="35" xml:space="preserve">${c.title}</text>`;
  svg.innerHTML = out;
}

document.querySelectorAll('[data-chart]').forEach(svg => draw(svg, CHARTS[svg.dataset.chart]));
```
